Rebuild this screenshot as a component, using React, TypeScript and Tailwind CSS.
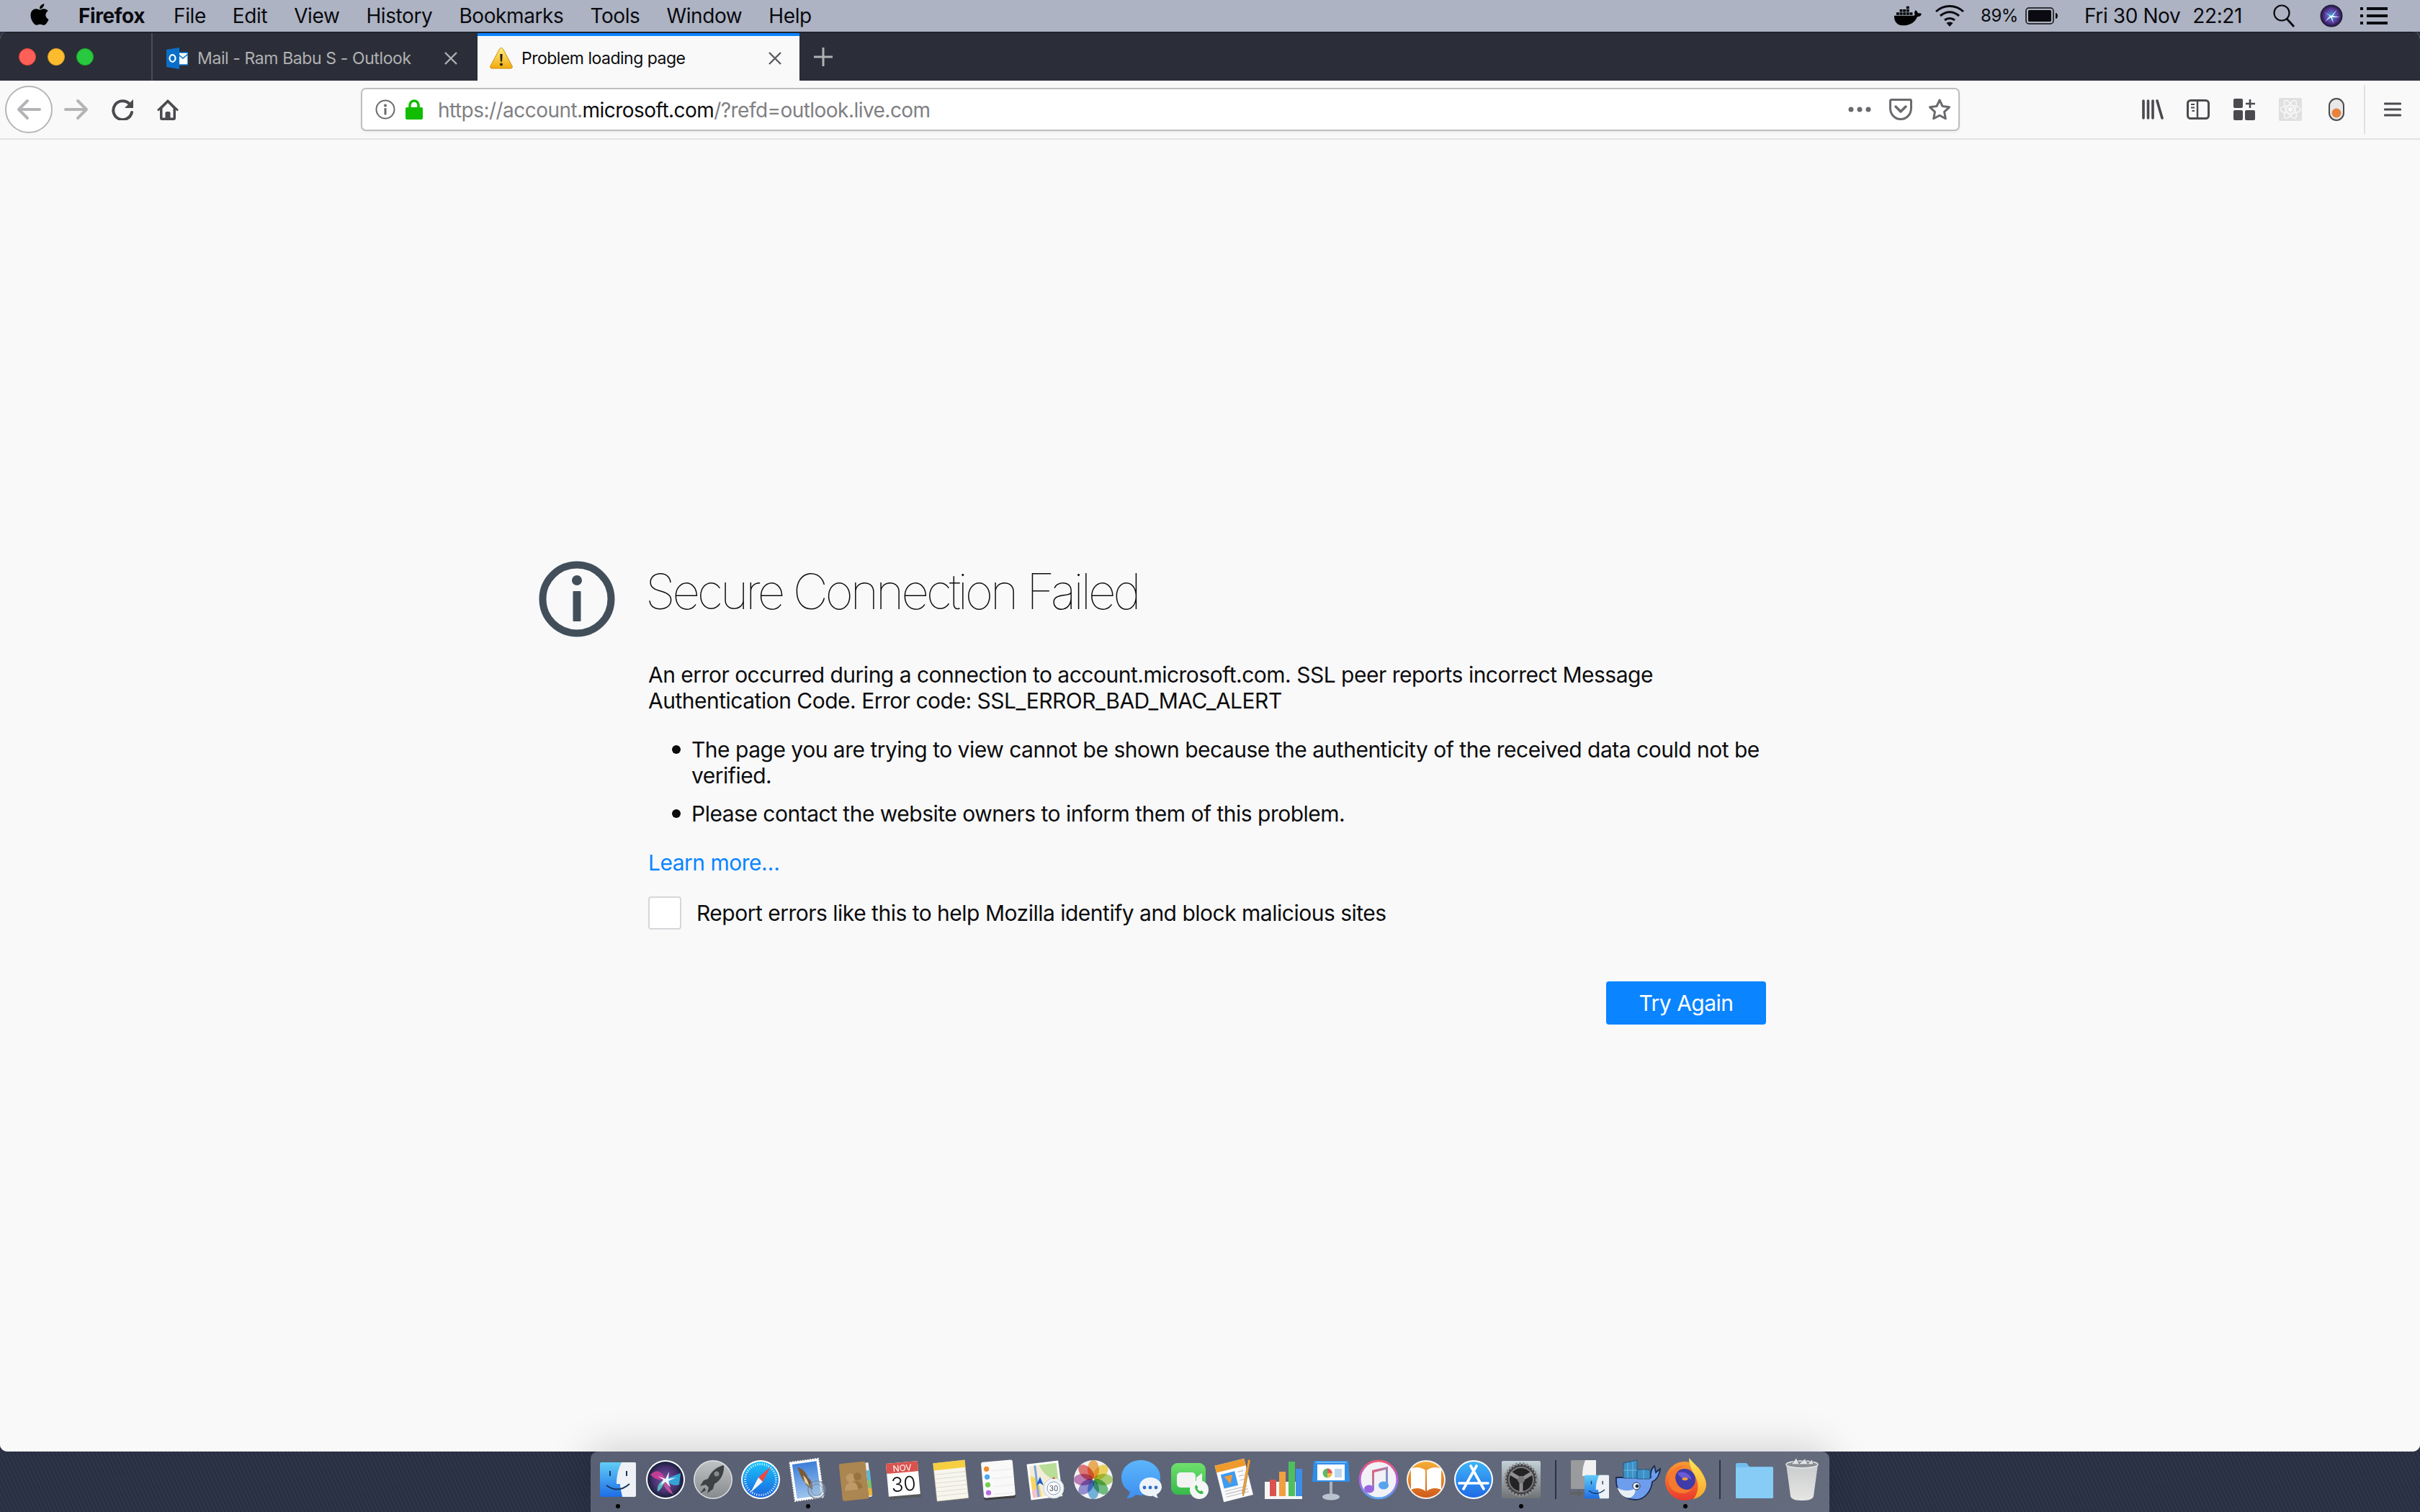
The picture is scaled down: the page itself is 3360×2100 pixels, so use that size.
import React from "react";
import { FaApple, FaDocker } from "react-icons/fa";

const XIcon = ({ c }: { c: string }) => (
  <svg width="20" height="20" viewBox="0 0 20 20" className="shrink-0">
    <path d="M2 2L18 18M18 2L2 18" stroke={c} strokeWidth="2.4" fill="none" />
  </svg>
);

const Outlook = () => (
  <svg width="30" height="30" viewBox="0 0 30 30" className="shrink-0">
    <path d="M13 7H30V24H13Z" fill="#fff" stroke="#0a6fc9" strokeWidth="1.5" />
    <path d="M17 10l6 5 7-6" stroke="#0a6fc9" strokeWidth="1.6" fill="none" />
    <path d="M0 3L18 0V30L0 27Z" fill="#0a6fc9" />
    <ellipse cx="8.5" cy="15" rx="4" ry="4.8" fill="none" stroke="#fff" strokeWidth="2.2" />
  </svg>
);

const Warn = () => (
  <svg width="32" height="32" viewBox="0 0 32 32" className="shrink-0">
    <defs>
      <linearGradient id="wg" x1="0" y1="0" x2="0" y2="1">
        <stop offset="0" stopColor="#fff07a" />
        <stop offset="1" stopColor="#f0a90e" />
      </linearGradient>
    </defs>
    <path d="M16 1.5c1.2 0 2 .8 2.6 2L31 26.5c1 2-.2 3.5-2 3.5H3c-1.800 0-3-1.500-2-3.500L13.400 3.500c.6-1.200 1.400-2 2.600-2Z" fill="url(#wg)" stroke="#d08a0a" strokeWidth="1" />
    <path d="M14.300 10h3.400l-.6 10.500h-2.200Z" fill="#222" />
    <circle cx="16" cy="24.500" r="2" fill="#222" />
  </svg>
);

/* ---------- dock icons ---------- */
const S = ({ children }: { children: React.ReactNode }) => (
  <svg width="66" height="66" viewBox="0 0 66 66" className="block">
    {children}
  </svg>
);

const FinderFace = ({ id, x, y, w, h }: { id: string; x: number; y: number; w: number; h: number }) => (
  <svg x={x} y={y} width={w} height={h} viewBox="0 0 50 48">
    <defs>
      <linearGradient id={id} x1="0" y1="0" x2="0" y2="1">
        <stop offset="0" stopColor="#62cdf7" />
        <stop offset="1" stopColor="#1e6de6" />
      </linearGradient>
    </defs>
    <rect width="50" height="48" rx="2" fill={`url(#${id})`} />
    <path d="M30 0H48a2 2 0 0 1 2 2V46a2 2 0 0 1-2 2H31C30 42 28 36 28 30h-5C23 18 26 8 30 0Z" fill="#eef1f5" />
    <rect x="13" y="12" width="2" height="7" fill="#17375f" />
    <rect x="36" y="12" width="2" height="7" fill="#17375f" />
    <path d="M9 32Q25 44 41 30" stroke="#17375f" strokeWidth="2" fill="none" />
  </svg>
);

const Finder = () => (
  <S>
    <FinderFace id="fa" x={8} y={9} w={50} h={48} />
  </S>
);

const Siri = () => (
  <S>
    <defs>
      <radialGradient id="sg">
        <stop offset="0" stopColor="#7a4f9e" />
        <stop offset="0.7" stopColor="#47306e" />
        <stop offset="1" stopColor="#15203a" />
      </radialGradient>
    </defs>
    <circle cx="33" cy="33" r="27" fill="#fff" />
    <circle cx="33" cy="33" r="25" fill="url(#sg)" />
    <path d="M12 26Q24 14 33 32Q20 36 12 26Z" fill="#d43f9a" opacity="0.85" />
    <path d="M54 24Q44 28 33 32Q42 44 52 40Z" fill="#2fb6e6" opacity="0.85" />
    <path d="M33 32Q38 44 44 54Q32 48 30 38Z" fill="#c9589e" opacity="0.9" />
    <path d="M33 32Q20 38 22 50Q30 44 33 32Z" fill="#58d0c7" opacity="0.85" />
    <path d="M33 32L38 22L37 32L48 30L37 35L40 44L33 36L26 41L30 33L22 28Z" fill="#eaf6ff" />
  </S>
);

const Launch = () => (
  <S>
    <defs>
      <linearGradient id="lg" x1="0" y1="0" x2="0" y2="1">
        <stop offset="0" stopColor="#bfc2c4" />
        <stop offset="1" stopColor="#878b8d" />
      </linearGradient>
    </defs>
    <circle cx="33" cy="33" r="27" fill="#dfe1e2" />
    <circle cx="33" cy="33" r="25.500" fill="url(#lg)" />
    <path d="M48 13C38 15 30 22 26 32L20 34L15 42L23 40L27 44L25 52L33 46L35 39C44 34 49 24 48 13Z" fill="#3f4244" />
    <circle cx="38" cy="25" r="3.500" fill="#85898c" />
    <path d="M21 44L15 52L23 48Z" fill="#3f4244" />
  </S>
);

const Safari = () => (
  <S>
    <defs>
      <linearGradient id="sf" x1="0" y1="0" x2="0" y2="1">
        <stop offset="0" stopColor="#19c4fb" />
        <stop offset="1" stopColor="#1b66df" />
      </linearGradient>
    </defs>
    <circle cx="33" cy="33" r="27" fill="#fff" />
    <circle cx="33" cy="33" r="25" fill="url(#sf)" />
    <circle cx="33" cy="33" r="21.500" fill="none" stroke="#fff" strokeWidth="3" strokeDasharray="1 2.200" />
    <path d="M47 15L30 30L36 36Z" fill="#f0483e" />
    <path d="M19 51L30 30L36 36Z" fill="#f4f4f4" />
  </S>
);

const Mail = () => (
  <S>
    <defs>
      <linearGradient id="ml" x1="0" y1="0" x2="0" y2="1">
        <stop offset="0" stopColor="#3f7fd8" />
        <stop offset="1" stopColor="#9cc4ee" />
      </linearGradient>
    </defs>
    <g transform="rotate(-8 33 33)">
      <rect x="11" y="6" width="40" height="54" fill="#fff" stroke="#fff" strokeWidth="2" strokeDasharray="2 1.500" />
      <rect x="14" y="9" width="34" height="48" fill="url(#ml)" />
      <path d="M21 14C28 17 32 24 33 30C37 34 39 40 37 48L31 42C27 36 23 28 21 14Z" fill="#7a5a35" />
      <path d="M27 26C31 30 33 36 33 42L28 36Z" fill="#e2cfa8" />
    </g>
    <circle cx="45" cy="47" r="12" fill="#9db6cf" fillOpacity="0.35" stroke="#6f7f93" strokeWidth="1.200" />
    <circle cx="45" cy="47" r="8" fill="none" stroke="#6f7f93" strokeWidth="0.800" />
  </S>
);

const Contacts = () => (
  <S>
    <g transform="rotate(-6 33 33)">
      <rect x="46" y="11" width="7" height="48" rx="1" fill="#e9ebea" />
      <rect x="49" y="22" width="5" height="14" fill="#5db7d8" />
      <rect x="49" y="36" width="5" height="11" fill="#7fc36b" />
      <rect x="49" y="47" width="5" height="10" fill="#eab33d" />
      <rect x="12" y="9" width="37" height="52" rx="3" fill="#ac8650" />
      <circle cx="26" cy="30" r="6" fill="#bd9a68" />
      <path d="M17 47c0-8 4-11 9-11s9 3 9 11Z" fill="#bd9a68" />
      <circle cx="36" cy="29" r="5.500" fill="#98733f" />
      <path d="M31 36c6-2 11 3 10 10h-6C35 42 34 38 31 36Z" fill="#98733f" />
    </g>
  </S>
);

const Calendar = () => (
  <S>
    <g transform="rotate(-5 33 33)">
      <rect x="12" y="10" width="44" height="49" fill="#55595c" />
      <rect x="11" y="9" width="44" height="46" fill="#fff" />
      <rect x="11" y="9" width="44" height="14" fill="#d9534f" />
      <text x="33" y="21" textAnchor="middle" fontSize="12" fill="#fff" fontFamily="Inter, sans-serif">NOV</text>
      <text x="33" y="49" textAnchor="middle" fontSize="28" fill="#111" fontFamily="Inter, sans-serif" fontWeight="300">30</text>
    </g>
  </S>
);

const Notes = () => (
  <S>
    <g transform="rotate(-6 33 33)">
      <rect x="11" y="8" width="44" height="53" fill="#f7f6ee" stroke="#b7a98a" strokeWidth="0.500" />
      <rect x="11" y="8" width="44" height="10" fill="#f6cf40" />
      {[24, 30, 36, 42, 48, 54].map((y) => (
        <path key={y} d={`M11 ${y}H55`} stroke="#dedbd0" strokeWidth="1" />
      ))}
    </g>
  </S>
);

const Reminders = () => (
  <S>
    <g transform="rotate(-5 33 33)">
      <rect x="11" y="8" width="44" height="52" rx="3" fill="#3d3d3d" />
      <rect x="11" y="7" width="44" height="50" rx="3" fill="#f9f9f9" />
      {[
        ["#f08a2c", 17],
        ["#49a9f2", 28],
        ["#73d14f", 39],
        ["#b56de0", 50],
      ].map(([c, y]) => (
        <circle key={String(y)} cx="18" cy={Number(y)} r="3.600" fill={String(c)} />
      ))}
      {[17, 28, 39, 50].map((y) => (
        <path key={y} d={`M25 ${y + 3}H53`} stroke="#e5e5e5" strokeWidth="0.800" />
      ))}
    </g>
  </S>
);

const Maps = () => (
  <S>
    <g transform="rotate(-7 31 31)">
      <rect x="9" y="9" width="44" height="50" fill="#fff" />
      <rect x="12" y="12" width="38" height="44" fill="#f3ecd9" />
      <path d="M26 12H50V36C40 34 30 26 26 12Z" fill="#b8de97" />
      <path d="M12 26C20 28 24 36 24 56H12Z" fill="#f9d65c" />
      <path d="M12 45H22V56H12Z" fill="#f5c0cf" />
      <path d="M20 12V56" stroke="#7aa7de" strokeWidth="3" />
    </g>
    <path d="M20 41L25 29L30 41L25 38Z" fill="#1e5fc4" />
    <circle cx="44" cy="45" r="14" fill="#f3f5f6" stroke="#ccd0d3" />
    <circle cx="44" cy="45" r="9" fill="#fff" stroke="#5f86a8" strokeWidth="0.800" />
    <text x="44" y="49" textAnchor="middle" fontSize="10" fill="#3a4a58" fontFamily="Inter, sans-serif">30</text>
    <path d="M44 29l2 3h-4Z" fill="#e0433b" />
  </S>
);

const Photos = () => {
  const colors = ["#f2a33a", "#f5d33f", "#9fce52", "#52b56a", "#58a9df", "#7f7bd0", "#b565b0", "#e25a5a"];
  return (
    <S>
      <circle cx="33" cy="33" r="27" fill="#f2f2f2" />
      {colors.map((c, i) => (
        <ellipse key={c} cx="33" cy="19" rx="8" ry="13" fill={c} fillOpacity="0.8" transform={`rotate(${i * 45} 33 33)`} style={{ mixBlendMode: "multiply" }} />
      ))}
    </S>
  );
};

const Messages = () => (
  <S>
    <defs>
      <linearGradient id="mg" x1="0" y1="0" x2="0" y2="1">
        <stop offset="0" stopColor="#5cb6fb" />
        <stop offset="1" stopColor="#3d8ff0" />
      </linearGradient>
    </defs>
    <path d="M33 6C18 6 6 16 6 30c0 9 5 16 12 20-1 3-2 6-5 9 6 0 10-2 13-5 2 .5 5 .7 7 .7 15 0 27-11 27-24.700S48 6 33 6Z" fill="url(#mg)" />
    <path d="M46 30c-9 0-15 6-15 13 0 8 7 13 15 13 1 0 3 0 4-.5 2 2 5 3 7 3-1-2-2-3-2-5 4-2 7-6 7-10.500 0-7-7-13-16-13Z" fill="#edf3f9" />
    <circle cx="38" cy="44" r="2.400" fill="#2f6fc7" />
    <circle cx="46" cy="44" r="2.400" fill="#2f6fc7" />
    <circle cx="54" cy="44" r="2.400" fill="#2f6fc7" />
  </S>
);

const Facetime = () => (
  <S>
    <defs>
      <linearGradient id="ft" x1="0" y1="0" x2="0" y2="1">
        <stop offset="0" stopColor="#6fe06c" />
        <stop offset="1" stopColor="#35b94a" />
      </linearGradient>
    </defs>
    <rect x="9" y="10" width="48" height="44" rx="9" fill="url(#ft)" />
    <rect x="17" y="23" width="26" height="21" rx="5" fill="#f3f3f3" />
    <path d="M44 30L52 24V44L44 38Z" fill="#f3f3f3" />
    <circle cx="48" cy="47" r="13" fill="#f4f7f4" />
    <path d="M43 41c2-1 3 2 3 3s-1 1-.5 2 3 3.500 4 3 1-1 2-.5 3 2 2 3.500-4 1.500-7-1-6-7-3.500-10Z" fill="#3dbb4c" />
  </S>
);

const Pages = () => (
  <S>
    <g transform="rotate(-14 30 33)">
      <rect x="9" y="8" width="42" height="52" fill="#fbfbfb" />
      <path d="M9 8H51V18H9Z" fill="#ef9b2d" />
      <rect x="14" y="22" width="20" height="20" fill="#3f9bef" />
      <path d="M18 26h12l-6 12Z" fill="#f29a38" />
      {[46, 50, 54].map((y) => (
        <path key={y} d={`M14 ${y}H46`} stroke="#b9bcc0" strokeWidth="1.200" />
      ))}
      <path d="M38 24H46M38 30H46M38 36H46" stroke="#b9bcc0" strokeWidth="1.200" />
    </g>
    <path d="M53 6L45 50L43 56L42 50L50 5Z" fill="#efa33a" stroke="#a96e1a" strokeWidth="0.600" />
  </S>
);

const Numbers = () => (
  <S>
    <path d="M7 36H59V60H7Z" fill="#f6f6f6" />
    <rect x="14" y="33" width="9" height="23" fill="#d9534f" />
    <rect x="27" y="22" width="9" height="34" fill="#f0a040" />
    <rect x="40" y="8" width="9" height="48" fill="#4fbf5d" />
    <rect x="50" y="18" width="9" height="38" fill="#3d8ee8" />
  </S>
);

const Keynote = () => (
  <S>
    <rect x="31" y="36" width="4" height="20" fill="#aab3bb" />
    <ellipse cx="33" cy="57" rx="12" ry="4.500" fill="#b7c4cf" />
    <path d="M9 7H57L59 36H7Z" fill="#2f8fe8" />
    <rect x="12" y="8" width="42" height="2" fill="#6fb6f5" />
    <rect x="14" y="12" width="38" height="22" fill="#fff" />
    <circle cx="28" cy="24" r="6.500" fill="#5ab96b" />
    <path d="M28 24V17.500A6.500 6.500 0 0 1 34.500 24Z" fill="#e9545b" />
    <path d="M28 24H34.500A6.500 6.500 0 0 1 28 30.500Z" fill="#f3b73d" />
    <rect x="38" y="18" width="10" height="12" fill="#bcd6ee" />
  </S>
);

const Itunes = () => (
  <S>
    <defs>
      <linearGradient id="it" x1="0" y1="0" x2="0" y2="1">
        <stop offset="0" stopColor="#f35a6f" />
        <stop offset="0.5" stopColor="#b45ce0" />
        <stop offset="1" stopColor="#4fa7f0" />
      </linearGradient>
      <linearGradient id="in" x1="0" y1="0" x2="1" y2="1">
        <stop offset="0" stopColor="#f35a6f" />
        <stop offset="1" stopColor="#4fa7f0" />
      </linearGradient>
    </defs>
    <circle cx="33" cy="33" r="27.500" fill="url(#it)" />
    <circle cx="33" cy="33" r="24.500" fill="#f1f1f6" />
    <path d="M24 46V20L46 15V41L43 41V19L27 23V46Z" fill="url(#in)" />
    <ellipse cx="20" cy="46" rx="7" ry="5.500" fill="#9a66e0" />
    <ellipse cx="40" cy="41" rx="7" ry="5.500" fill="#57a3ee" />
  </S>
);

const Books = () => (
  <S>
    <defs>
      <linearGradient id="bk" x1="0" y1="0" x2="0" y2="1">
        <stop offset="0" stopColor="#f6ad33" />
        <stop offset="1" stopColor="#d05a1c" />
      </linearGradient>
    </defs>
    <circle cx="33" cy="33" r="27" fill="#f6f2ea" />
    <circle cx="33" cy="33" r="25" fill="url(#bk)" />
    <path d="M32 20C26 15 17 15 12 18V47C18 44 26 44 32 49Z" fill="#fff" />
    <path d="M34 20C40 15 49 15 54 18V47C48 44 40 44 34 49Z" fill="#fff" />
  </S>
);

const AppStore = () => (
  <S>
    <defs>
      <linearGradient id="as" x1="0" y1="0" x2="0" y2="1">
        <stop offset="0" stopColor="#3fb4f8" />
        <stop offset="1" stopColor="#1e6ae6" />
      </linearGradient>
    </defs>
    <circle cx="33" cy="33" r="27" fill="#fff" />
    <circle cx="33" cy="33" r="25" fill="url(#as)" />
    <path d="M37 14L19 46M29 14L47 46M13 38H53" stroke="#fff" strokeWidth="3.600" strokeLinecap="round" fill="none" />
  </S>
);

const Prefs = () => (
  <S>
    <defs>
      <linearGradient id="pf" x1="0" y1="0" x2="0" y2="1">
        <stop offset="0" stopColor="#c3d2d8" />
        <stop offset="1" stopColor="#6f7375" />
      </linearGradient>
    </defs>
    <rect x="6" y="7" width="54" height="52" rx="2" fill="url(#pf)" />
    <circle cx="33" cy="33" r="22" fill="#3f3f41" stroke="#8e8e90" strokeWidth="4" strokeDasharray="3 2" />
    <circle cx="33" cy="33" r="17" fill="#232325" stroke="#77777a" strokeWidth="2" />
    <path d="M33 33V50M33 33L18 24M33 33L48 24" stroke="#8f8f91" strokeWidth="5" />
    <circle cx="33" cy="33" r="5" fill="#77777a" />
  </S>
);

const Migration = () => (
  <S>
    <rect x="6" y="6" width="35" height="40" rx="1.500" fill="#9a9b9d" />
    <path d="M26 6H41V46H28L26 28H22C22 18 24 11 26 6Z" fill="#f1f1f1" />
    <path d="M5 50H15V46L23 52L15 58V54H5Z" fill="#5f6264" />
    <FinderFace id="fb" x={25} y={26} w={34} h={34} />
  </S>
);

const Docker = () => (
  <S>
    <path d="M3 33C2 48 14 61 30 61C43 61 52 48 53 36C58 34 63 28 64 18L58 23L56 14C52 17 50 24 51 30H3Z" fill="#6f9ded" stroke="#1b2c50" strokeWidth="1.800" />
    <path d="M4 44C13 50 23 49 30 45C30 54 24 60 17 58C11 56 7 51 4 44Z" fill="#e9eef3" />
    <circle cx="31" cy="42" r="5" fill="#fff" stroke="#1b2c50" />
    <circle cx="32" cy="42" r="2.500" fill="#1b2c50" />
    <path d="M13 10L32 6V31H13Z" fill="#3c91c8" stroke="#24547a" />
    <path d="M32 19H50V32H32Z" fill="#3c91c8" stroke="#24547a" />
    <path d="M19 9V31M26 8V31M13 20H32M41 19V32" stroke="#7fc4e6" strokeWidth="0.800" />
  </S>
);

const Firefox = () => (
  <S>
    <defs>
      <linearGradient id="ff1" x1="0" y1="0" x2="0" y2="1">
        <stop offset="0" stopColor="#f79a33" />
        <stop offset="0.55" stopColor="#f2642c" />
        <stop offset="1" stopColor="#e8382f" />
      </linearGradient>
      <linearGradient id="ff2" x1="0" y1="0" x2="0" y2="1">
        <stop offset="0" stopColor="#ffe95a" />
        <stop offset="1" stopColor="#f9a32b" />
      </linearGradient>
    </defs>
    <circle cx="32" cy="35" r="27" fill="url(#ff1)" />
    <path d="M38 3C47 13 62 26 62 40C62 50 54 58 44 60C53 50 52 34 44 24C41 18 38 11 38 3Z" fill="url(#ff2)" />
    <circle cx="32" cy="33" r="15" fill="#3f3ba8" />
    <path d="M22 24C30 20 40 24 42 34C40 30 34 30 31 32C27 30 24 28 22 24Z" fill="#6a5ad4" />
    <path d="M10 30C14 18 24 12 34 13C26 16 20 22 19 30C20 42 30 50 42 46C36 54 22 54 14 46C10 42 9 36 10 30Z" fill="#f57a2e" />
    <path d="M28 32c3-3 7-2 9 0-2 3-7 3-9 0Z" fill="#f7a034" />
  </S>
);

const Folder = () => (
  <S>
    <path d="M7 12a2 2 0 0 1 2-2H22L26 15H57a2 2 0 0 1 2 2V57a2 2 0 0 1-2 2H9a2 2 0 0 1-2-2Z" fill="#73bdf0" />
    <path d="M7 16H59V57a2 2 0 0 1-2 2H9a2 2 0 0 1-2-2Z" fill="#86ccf6" />
  </S>
);

const Trash = () => (
  <S>
    <defs>
      <linearGradient id="tr" x1="0" y1="0" x2="0" y2="1">
        <stop offset="0" stopColor="#c9cccd" />
        <stop offset="1" stopColor="#e6e6e4" />
      </linearGradient>
    </defs>
    <path d="M11 12L17 56C18 61 26 62 33 62S48 61 49 56L55 12Z" fill="url(#tr)" />
    <ellipse cx="33" cy="12" rx="22" ry="5" fill="#8d9296" stroke="#e9e9e9" strokeWidth="1.500" />
    <path d="M18 12L25 3L29 11L37 4L41 11L47 5L49 12Z" fill="#dfe3e6" stroke="#6c7074" strokeWidth="0.800" />
  </S>
);

const DockItem = ({ icon, dot }: { icon: React.ReactNode; dot?: boolean }) => (
  <div className="flex w-[66px] flex-col items-center">
    {icon}
    {dot ? <div className="mt-px h-[6px] w-[6px] rounded-full bg-black" /> : null}
  </div>
);

const DockSep = () => (
  <div className="flex h-[78px] w-[30px] justify-center">
    <div className="h-[54px] w-[2px] translate-y-[6px] self-start bg-[#2e3340]" />
  </div>
);

const MENU = ["Edit", "View", "History", "Bookmarks", "Tools", "Window", "Help"];

export default function App() {
  return (
    <div className="flex h-[2100px] w-[3360px] flex-col overflow-hidden bg-[#2a3146] bg-[repeating-linear-gradient(65deg,rgba(255,255,255,0.025)_0px,rgba(255,255,255,0.025)_2px,rgba(0,0,0,0.04)_2px,rgba(0,0,0,0.04)_5px)] font-[Inter,sans-serif]">
      {/* menu bar */}
      <div className="flex h-[44px] shrink-0 items-center bg-[#adb3c2] text-[28px] tracking-[-0.4px] text-[#0a0a10]">
        <FaApple className="ml-[41px] h-[34px] w-[28px] shrink-0 -translate-y-[2px] text-black" />
        <span className="ml-[40px] font-bold">Firefox</span>
        <span className="ml-[40px]">File</span>
        {MENU.map((t) => (
          <span key={t} className="ml-[37px]">
            {t}
          </span>
        ))}
        <div className="flex-1" />
        <FaDocker className="h-[36px] w-[38px] shrink-0 text-black" />
        <svg width="44" height="34" viewBox="0 0 44 34" className="ml-[17px] shrink-0">
          <path d="M3 11C14 1 30 1 41 11M9 17C17 10 27 10 35 17M15 23C19 19.500 25 19.500 29 23" stroke="#0a0a10" strokeWidth="3" fill="none" />
          <path d="M22 32L17.500 27C20 25 24 25 26.500 27Z" fill="#0a0a10" />
        </svg>
        <span className="ml-[21px] text-[24px]">89%</span>
        <svg width="46" height="24" viewBox="0 0 46 24" className="ml-[10px] shrink-0">
          <rect x="1" y="1" width="38" height="22" rx="4" fill="none" stroke="#0a0a10" strokeWidth="1.500" />
          <rect x="4" y="4" width="32" height="16" rx="1.500" fill="#0a0a10" />
          <path d="M42 8c2 0 3 2 3 4s-1 4-3 4Z" fill="#0a0a10" />
        </svg>
        <span className="ml-[36px]">Fri 30 Nov</span>
        <span className="ml-[17px]">22:21</span>
        <svg width="32" height="34" viewBox="0 0 32 34" className="ml-[42px] shrink-0">
          <circle cx="13" cy="13" r="10.500" fill="none" stroke="#0a0a10" strokeWidth="2.200" />
          <path d="M20 21L30 32" stroke="#0a0a10" strokeWidth="2.800" />
        </svg>
        <svg width="32" height="32" viewBox="0 0 32 32" className="ml-[34px] shrink-0">
          <defs>
            <radialGradient id="ms">
              <stop offset="0" stopColor="#3fa9e0" />
              <stop offset="0.6" stopColor="#5b3a9c" />
              <stop offset="1" stopColor="#1a1430" />
            </radialGradient>
          </defs>
          <circle cx="16" cy="16" r="15.500" fill="url(#ms)" />
          <path d="M16 16L24 7L18 16L28 18L17 18L19 27L15 18L7 24L14 16L6 11Z" fill="#f2f8ff" />
        </svg>
        <svg width="38" height="26" viewBox="0 0 38 26" className="ml-[24px] mr-[45px] shrink-0">
          <path d="M0 3H4M9 3H38M0 13H4M9 13H38M0 23H4M9 23H38" stroke="#0a0a10" strokeWidth="4" />
        </svg>
      </div>

      {/* window */}
      <div className="flex h-[1972px] shrink-0 flex-col overflow-hidden rounded-[10px] bg-[#f9f9fa]">
        {/* tabs */}
        <div className="flex h-[68px] shrink-0 border-t-2 border-[#20232c] bg-[#2b2e38] text-[23px]">
          <div className="flex w-[212px] shrink-0 items-center gap-[16px] border-r-2 border-[#4a4d56] pl-[26px]">
            <div className="h-[24px] w-[24px] rounded-full border border-[#e0443e] bg-[#fe5f57]" />
            <div className="h-[24px] w-[24px] rounded-full border border-[#dea123] bg-[#febb2e]" />
            <div className="h-[24px] w-[24px] rounded-full border border-[#1aab29] bg-[#28c83f]" />
          </div>
          <div className="flex w-[451px] shrink-0 items-center pl-[19px] pr-[27px] pt-[4px] tracking-[-0.4px] text-[#b1b1b3]">
            <Outlook />
            <span className="ml-[13px] flex-1 whitespace-nowrap">Mail - Ram Babu S - Outlook</span>
            <XIcon c="#b1b1b3" />
          </div>
          <div className="flex w-[447px] shrink-0 items-center border-t-4 border-[#0a84ff] bg-[#f9f9fa] pl-[17px] pr-[24px] tracking-[-0.5px] text-[#0c0c0d]">
            <Warn />
            <span className="ml-[12px] flex-1 whitespace-nowrap">Problem loading page</span>
            <XIcon c="#5b5b5f" />
          </div>
          <svg width="28" height="28" viewBox="0 0 28 28" className="ml-[19px] self-center">
            <path d="M14 1V27M1 14H27" stroke="#b1b1b3" strokeWidth="3" />
          </svg>
        </div>

        {/* toolbar */}
        <div className="flex h-[82px] shrink-0 items-center border-b-2 border-[#e3e3e3] pb-px text-[#4a4a4f]">
          <div className="ml-[7px] flex h-[66px] w-[66px] shrink-0 items-center justify-center rounded-full border-2 border-[#b6b6b8] bg-white">
            <svg width="34" height="30" viewBox="0 0 34 30">
              <path d="M32 15H3M15 3L3 15L15 27" stroke="#b4b4b6" strokeWidth="4" strokeLinecap="round" strokeLinejoin="round" fill="none" />
            </svg>
          </div>
          <svg width="34" height="30" viewBox="0 0 34 30" className="ml-[16px] shrink-0">
            <path d="M2 15H31M19 3L31 15L19 27" stroke="#b4b4b6" strokeWidth="4" strokeLinecap="round" strokeLinejoin="round" fill="none" />
          </svg>
          <svg width="32" height="30" viewBox="0 0 32 30" className="ml-[32px] shrink-0">
            <path d="M25 7.500A13 13 0 1 0 28 19" stroke="#4a4a4f" strokeWidth="4" strokeLinecap="round" fill="none" />
            <path d="M30 1V13H18Z" fill="#4a4a4f" />
          </svg>
          <svg width="32" height="32" viewBox="0 0 32 32" className="ml-[30px] shrink-0">
            <path d="M16 2L1 16.500L3 18.500L5 16.500V28a3 3 0 0 0 3 3H24a3 3 0 0 0 3-3V16.500L29 18.500L31 16.500Z" fill="#4a4a4f" />
            <path d="M16 7L23.500 14.500V27.500H19.500V21a2 2 0 0 0-2-2h-3a2 2 0 0 0-2 2v6.500H8.500V14.500Z" fill="#f9f9fa" />
            <rect x="14.500" y="21" width="3" height="3" fill="#4a4a4f" />
          </svg>

          {/* url bar */}
          <div className="ml-[252px] flex h-[60px] w-[2220px] shrink-0 items-center rounded-[7px] border-2 border-[#bebebe] bg-white pl-[18px] pr-[10px] text-[28px] tracking-[-0.54px] shadow-[0_2px_4px_rgba(0,0,0,0.05)]">
            <svg width="28" height="28" viewBox="0 0 28 28" className="shrink-0">
              <circle cx="14" cy="14" r="12.500" fill="none" stroke="#6a6a6e" strokeWidth="2" />
              <circle cx="14" cy="8.500" r="2" fill="#6a6a6e" />
              <rect x="12.500" y="12" width="3" height="9.500" rx="1" fill="#6a6a6e" />
            </svg>
            <svg width="24" height="28" viewBox="0 0 24 28" className="ml-[14px] shrink-0">
              <path d="M6 12V8a6 6 0 0 1 12 0v4" fill="none" stroke="#12bc00" strokeWidth="3.500" />
              <rect y="11" width="24" height="17" rx="2" fill="#12bc00" />
            </svg>
            <span className="ml-[21px] translate-y-px whitespace-nowrap text-[#808083]">
              https://account.<span className="text-[#0c0c0d]">microsoft.com</span>/?refd=outlook.live.com
            </span>
            <div className="flex-1" />
            <svg width="32" height="8" viewBox="0 0 32 8" className="shrink-0">
              <circle cx="4" cy="4" r="3.500" fill="#6a6a6e" />
              <circle cx="16" cy="4" r="3.500" fill="#6a6a6e" />
              <circle cx="28" cy="4" r="3.500" fill="#6a6a6e" />
            </svg>
            <svg width="32" height="30" viewBox="0 0 32 30" className="ml-[25px] shrink-0">
              <path d="M3 1.500H29a1.500 1.500 0 0 1 1.500 1.500V13C30.500 22 24 28.500 16 28.500S1.500 22 1.500 13V3A1.500 1.500 0 0 1 3 1.500Z" fill="none" stroke="#6a6a6e" strokeWidth="3" />
              <path d="M9 11L16 18L23 11" fill="none" stroke="#6a6a6e" strokeWidth="3.500" strokeLinecap="round" strokeLinejoin="round" />
            </svg>
            <svg width="32" height="32" viewBox="0 0 32 32" className="ml-[22px] shrink-0">
              <path d="M16 3L20 11.500L29.500 12.800L22.500 19.300L24.300 28.800L16 24.200L7.700 28.800L9.500 19.300L2.500 12.800L12 11.500Z" fill="none" stroke="#6a6a6e" strokeWidth="3" strokeLinejoin="round" />
            </svg>
          </div>

          {/* right tools */}
          <svg width="30" height="28" viewBox="0 0 30 28" className="ml-[253px] shrink-0">
            <path d="M2 2V26M8.500 2V26M15 2V26M21 2L28 26" stroke="#4a4a4f" strokeWidth="3.600" strokeLinecap="round" fill="none" />
          </svg>
          <svg width="32" height="28" viewBox="0 0 32 28" className="ml-[32px] shrink-0">
            <rect x="1.500" y="1.500" width="29" height="25" rx="4" fill="none" stroke="#4a4a4f" strokeWidth="3" />
            <path d="M15 2V26" stroke="#4a4a4f" strokeWidth="2.500" />
            <path d="M6 7H11M6 11.500H11M7.500 16H11" stroke="#4a4a4f" strokeWidth="2" />
          </svg>
          <svg width="30" height="30" viewBox="0 0 30 30" className="ml-[33px] shrink-0">
            <rect x="0" y="0" width="13" height="13" rx="2" fill="#4a4a4f" />
            <rect x="0" y="16" width="13" height="14" rx="2" fill="#4a4a4f" />
            <rect x="16" y="16" width="14" height="14" rx="2" fill="#4a4a4f" />
            <path d="M23 1V13M17 7H30" stroke="#4a4a4f" strokeWidth="2.600" />
          </svg>
          <svg width="32" height="32" viewBox="0 0 32 32" className="ml-[33px] shrink-0">
            <rect width="32" height="32" rx="2" fill="#e0e0e0" />
            <g fill="none" stroke="#f9f9fa" strokeWidth="1.500">
              <ellipse cx="16" cy="16" rx="14" ry="5.500" />
              <ellipse cx="16" cy="16" rx="14" ry="5.500" transform="rotate(60 16 16)" />
              <ellipse cx="16" cy="16" rx="14" ry="5.500" transform="rotate(120 16 16)" />
            </g>
            <circle cx="16" cy="16" r="3" fill="#f9f9fa" />
          </svg>
          <svg width="22" height="32" viewBox="0 0 22 32" className="ml-[37px] shrink-0">
            <rect x="1" y="1" width="20" height="30" rx="10" fill="#e8e8e8" stroke="#4a4a4f" strokeWidth="2" />
            <circle cx="11" cy="21" r="6.500" fill="#e8833f" />
          </svg>
          <div className="ml-[27px] h-[68px] w-[2px] shrink-0 bg-[#e1e1e2]" />
          <svg width="24" height="20" viewBox="0 0 24 20" className="ml-[26px] shrink-0">
            <path d="M1.500 2H22.500M1.500 10H22.500M1.500 18H22.500" stroke="#4a4a4f" strokeWidth="3.200" strokeLinecap="round" />
          </svg>
        </div>

        {/* page */}
        <div className="flex flex-1 items-start bg-[#f9f9fa] pl-[748px] pt-[585px] text-[30px] leading-[36px] tracking-[-0.5px] text-[#0c0c0d]">
          <svg width="106" height="106" viewBox="0 0 106 106" className="shrink-0">
            <circle cx="53" cy="53" r="47.500" fill="none" stroke="#424f5a" strokeWidth="10" />
            <circle cx="53" cy="27" r="7" fill="#424f5a" />
            <rect x="47.500" y="42" width="11" height="42" rx="1" fill="#424f5a" />
          </svg>
          <div className="ml-[46px] w-[1560px]">
            <h1 className="-ml-[4px] h-[84px] whitespace-nowrap text-[68px] font-thin leading-[84px] tracking-[-4.4px]">Secure Connection Failed</h1>
            <p className="mt-[56px]">
              An error occurred during a connection to account.microsoft.com. SSL peer reports incorrect Message Authentication Code. Error code: SSL_ERROR_BAD_MAC_ALERT
            </p>
            <ul className="mt-[32px] space-y-[17px]">
              <li className="flex">
                <span className="ml-[33px] mt-[12px] h-[12px] w-[12px] shrink-0 rounded-full bg-[#0c0c0d]" />
                <span className="ml-[15px]">The page you are trying to view cannot be shown because the authenticity of the received data could not be verified.</span>
              </li>
              <li className="flex">
                <span className="ml-[33px] mt-[12px] h-[12px] w-[12px] shrink-0 rounded-full bg-[#0c0c0d]" />
                <span className="ml-[15px]">Please contact the website owners to inform them of this problem.</span>
              </li>
            </ul>
            <p className="mt-[32px] text-[#0a84ff]">Learn more…</p>
            <div className="mt-[29px] flex items-center">
              <div className="h-[46px] w-[46px] shrink-0 rounded-[4px] border-2 border-[#d7d7db] bg-white" />
              <span className="ml-[21px]">Report errors like this to help Mozilla identify and block malicious sites</span>
            </div>
            <div className="mt-[72px] flex w-[1552px] justify-end">
              <button className="h-[60px] w-[222px] rounded-[4px] bg-[#0a84ff] text-white">Try Again</button>
            </div>
          </div>
        </div>
      </div>

      {/* dock */}
      <div className="flex flex-1 justify-center">
        <div className="relative z-10 flex h-[84px] w-[1720px] rounded-t-[10px] bg-gradient-to-r from-[#596074] to-[#646b7d] pl-[5px] pt-[6px] shadow-[0_0_60px_rgba(0,0,0,0.2)]">
          <DockItem icon={<Finder />} dot />
          <DockItem icon={<Siri />} />
          <DockItem icon={<Launch />} />
          <DockItem icon={<Safari />} />
          <DockItem icon={<Mail />} dot />
          <DockItem icon={<Contacts />} />
          <DockItem icon={<Calendar />} />
          <DockItem icon={<Notes />} />
          <DockItem icon={<Reminders />} />
          <DockItem icon={<Maps />} />
          <DockItem icon={<Photos />} />
          <DockItem icon={<Messages />} />
          <DockItem icon={<Facetime />} />
          <DockItem icon={<Pages />} />
          <DockItem icon={<Numbers />} />
          <DockItem icon={<Keynote />} />
          <DockItem icon={<Itunes />} />
          <DockItem icon={<Books />} />
          <DockItem icon={<AppStore />} />
          <DockItem icon={<Prefs />} dot />
          <DockSep />
          <DockItem icon={<Migration />} />
          <DockItem icon={<Docker />} />
          <DockItem icon={<Firefox />} dot />
          <DockSep />
          <DockItem icon={<Folder />} />
          <DockItem icon={<Trash />} />
        </div>
      </div>
    </div>
  );
}
